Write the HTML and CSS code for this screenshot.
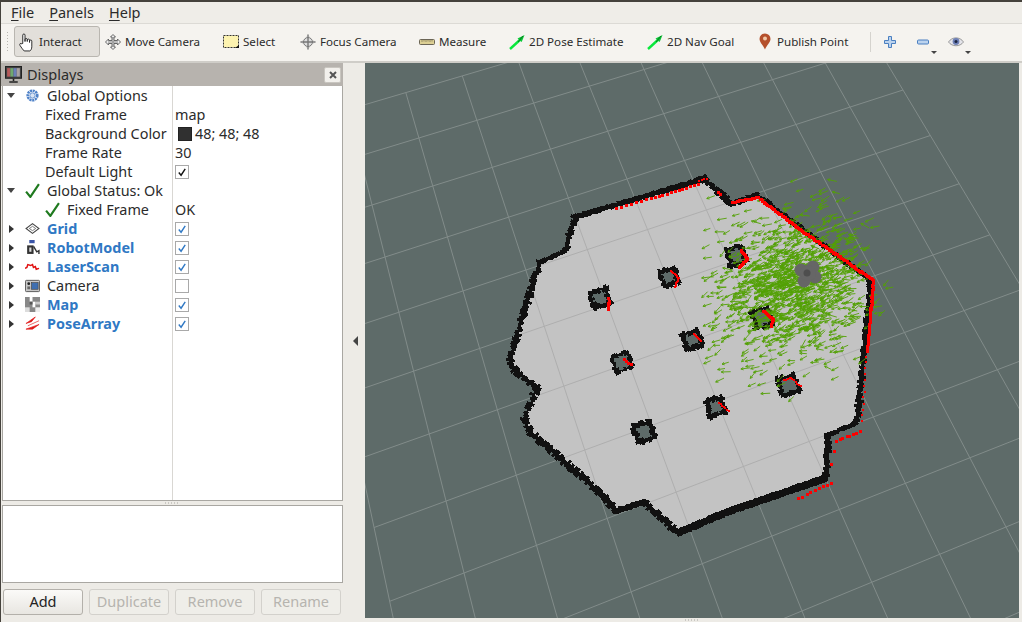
FILE: index.html
```html
<!DOCTYPE html>
<html lang="en">
<head>
<meta charset="utf-8">
<title>RViz</title>
<link rel="stylesheet" href="styles.css">
</head>
<body>
<div class="app">
  <nav class="menubar">
    <span class="menu"><u>F</u>ile</span>
    <span class="menu"><u>P</u>anels</span>
    <span class="menu"><u>H</u>elp</span>
  </nav>
  <div class="toolbar">
    <span class="grip"></span>
    <button class="tool t-interact active">
      <svg class="ticon" viewBox="0 0 17 21"><path d="M4 12V3.2a1.2 1.2 0 0 1 2.4 0V10V8a1.2 1.2 0 0 1 2.4 0v2V8.6a1.2 1.2 0 0 1 2.4 0V11V9.6a1.2 1.2 0 0 1 2.4 0v6c0 2-1 3.900-2 4.400H5.500C4.500 19 2.500 16.500 1 14c-.8-1.500.8-2.800 2-1.500z" fill="#fff" stroke="#222" stroke-width="1"/></svg>
      <span>Interact</span>
    </button>
    <button class="tool t-move">
      <svg class="ticon" viewBox="0 0 16 16"><path d="M8 .5 10.500 3H9v3.500h3.500V5L15.500 8l-3 3V9.500H9V13h1.500L8 15.500 5.500 13H7V9.500H3.500V11L.5 8l3-3v1.500H7V3H5.500z" fill="#eee" stroke="#666"/><path d="M3 8h10M8 3v10" stroke="#888"/></svg>
      <span>Move Camera</span>
    </button>
    <button class="tool t-select">
      <svg class="ticon" viewBox="0 0 16 16"><rect x=".5" y="1.500" width="15" height="12" fill="#fdf3b0" stroke="#333" stroke-dasharray="2 1"/><path d="M12 14h4v-3z" fill="#111"/></svg>
      <span>Select</span>
    </button>
    <button class="tool t-focus">
      <svg class="ticon" viewBox="0 0 16 16"><circle cx="8" cy="8" r="4.500" fill="#ddd" stroke="#777"/><path d="M8 .5V15.500M.5 8H15.500" stroke="#777" stroke-width="1.400"/><path d="M8 .5 6.500 3h3zM8 15.500 6.500 13h3zM.5 8 3 6.500v3zM15.500 8 13 6.500v3z" fill="#999"/></svg>
      <span>Focus Camera</span>
    </button>
    <button class="tool t-measure">
      <svg class="ticon" viewBox="0 0 16 16"><rect x=".5" y="5.500" width="15" height="5" rx="1" fill="#dccf94" stroke="#6b6555"/><path d="M3 6v2M5 6v1.500M7 6v2M9 6v1.500M11 6v2M13 6v1.500" stroke="#7a7050" stroke-width=".7"/></svg>
      <span>Measure</span>
    </button>
    <button class="tool t-pose">
      <svg class="ticon" viewBox="0 0 16 16"><path d="M1 15 12.500 4.500" stroke="#08e83c" stroke-width="2.400"/><path d="M8.500 4.500 15.500 1l-2.800 7z" fill="#09c836"/><path d="M9 8l5-6" stroke="#0b5a1a" stroke-width=".8"/></svg>
      <span>2D Pose Estimate</span>
    </button>
    <button class="tool t-nav">
      <svg class="ticon" viewBox="0 0 16 16"><path d="M1 15 12.500 4.500" stroke="#08e83c" stroke-width="2.400"/><path d="M8.500 4.500 15.500 1l-2.800 7z" fill="#09c836"/><path d="M9 8l5-6" stroke="#0b5a1a" stroke-width=".8"/></svg>
      <span>2D Nav Goal</span>
    </button>
    <button class="tool t-publish">
      <svg class="picon" viewBox="0 0 12 17"><path d="M6 16.500C4.500 12.500.5 9.500.5 6a5.500 5.500 0 0 1 11 0c0 3.500-4 6.500-5.500 10.500z" fill="#b5502c"/><circle cx="6" cy="5.500" r="2" fill="#f0c8a8"/></svg>
      <span>Publish Point</span>
    </button>
    <span class="tsep"></span>
    <svg class="vicon v-plus" viewBox="0 0 12 12"><path d="M4.500.5h3v4h4v3h-4v4h-3v-4h-4v-3h4z" fill="#bcd3ee" stroke="#4a7fc0"/></svg>
    <svg class="vicon v-minus" viewBox="0 0 12 12"><rect x=".5" y="4" width="11" height="4" rx="1" fill="#bcd3ee" stroke="#4a7fc0"/></svg>
    <span class="caret c-minus"></span>
    <svg class="vicon v-eye" viewBox="0 0 16 12"><path d="M.5 6C4 .5 12 .5 15.500 6 12 11 4 11 .5 6z" fill="#e4e4ea" stroke="#999"/><circle cx="8" cy="5.500" r="3.400" fill="#6d7fb5"/><circle cx="8" cy="5.500" r="1.500" fill="#1c2440"/></svg>
    <span class="caret c-eye"></span>
  </div>

  <div class="main">
    <aside class="dock">
      <header class="dock-title">
        <svg class="dock-icon" viewBox="0 0 16 16"><rect x=".5" y=".5" width="15" height="11" fill="#444" stroke="#222"/><rect x="2" y="2" width="3" height="8" fill="#b65a5a"/><rect x="5" y="2" width="3" height="8" fill="#6fa86f"/><rect x="8" y="2" width="3" height="8" fill="#6b7fb8"/><rect x="11" y="2" width="3" height="8" fill="#a8a0a0"/><path d="M8 12v2M4 15h8" stroke="#222" stroke-width="1.500"/></svg>
        <span class="dock-name">Displays</span>
        <span class="dock-close"><svg viewBox="0 0 8 8"><path d="M1 1l6 6M7 1 1 7" stroke="#555" stroke-width="2"/></svg></span>
      </header>

      <div class="tree">
        <div class="row"><div class="name"><span class="arrow down"></span><svg class="ic" viewBox="0 0 14 14"><circle cx="7" cy="7" r="4.500" fill="none" stroke="#4f82c8" stroke-width="2.400" stroke-dasharray="2 .6"/><circle cx="7" cy="7" r="2.500" fill="#d8e4f4" stroke="#4f82c8" stroke-width=".8"/></svg><span class="label">Global Options</span></div><div class="val"></div></div>
        <div class="row"><div class="name sub">Fixed Frame</div><div class="val">map</div></div>
        <div class="row"><div class="name sub">Background Color</div><div class="val"><span class="swatch"></span>48; 48; 48</div></div>
        <div class="row"><div class="name sub">Frame Rate</div><div class="val">30</div></div>
        <div class="row"><div class="name sub">Default Light</div><div class="val"><span class="check"><svg viewBox="0 0 13 13"><path d="M3 7l2.500 3L10 3" fill="none" stroke="#111" stroke-width="1.500"/></svg></span></div></div>
        <div class="row"><div class="name"><span class="arrow down"></span><svg class="ic" viewBox="0 0 14 14"><path d="M1 8l4 5L13 1" fill="none" stroke="#1f7a1f" stroke-width="2"/></svg><span class="label">Global Status: Ok</span></div><div class="val"></div></div>
        <div class="row"><div class="name sub2"><svg class="ic" viewBox="0 0 14 14"><path d="M1 8l4 5L13 1" fill="none" stroke="#1f7a1f" stroke-width="2"/></svg><span class="label">Fixed Frame</span></div><div class="val">OK</div></div>
        <div class="row"><div class="name"><span class="arrow"></span><svg class="ic" viewBox="0 0 14 14"><path d="M7 2.500 13 7 7 11.500 1 7z" fill="none" stroke="#444"/><path d="M7 5 10 7 7 9 4 7z" fill="none" stroke="#666" stroke-width=".8"/></svg><span class="label link">Grid</span></div><div class="val"><span class="check"><svg viewBox="0 0 13 13"><path d="M3 7l2.500 3L10 3" fill="none" stroke="#2f78c4" stroke-width="1.500"/></svg></span></div></div>
        <div class="row"><div class="name"><span class="arrow"></span><svg class="ic" viewBox="0 0 14 14"><rect x="4" y="0" width="5" height="3" fill="#3b55a8"/><rect x="2" y="5" width="6" height="8" fill="#333"/><rect x="4" y="7" width="2" height="4" fill="#ddd"/><path d="M8 6l3 5 2-1v3" fill="none" stroke="#333" stroke-width="1.300"/></svg><span class="label link">RobotModel</span></div><div class="val"><span class="check"><svg viewBox="0 0 13 13"><path d="M3 7l2.500 3L10 3" fill="none" stroke="#2f78c4" stroke-width="1.500"/></svg></span></div></div>
        <div class="row"><div class="name"><span class="arrow"></span><svg class="ic" viewBox="0 0 16 14"><path d="M0 9l2-1 1-3 3 1 2-1 1 3 2-1 1 3 3-1" fill="none" stroke="#e01010" stroke-width="1.600"/></svg><span class="label link">LaserScan</span></div><div class="val"><span class="check"><svg viewBox="0 0 13 13"><path d="M3 7l2.500 3L10 3" fill="none" stroke="#2f78c4" stroke-width="1.500"/></svg></span></div></div>
        <div class="row"><div class="name"><span class="arrow"></span><svg class="ic" viewBox="0 0 16 14"><rect x=".5" y="1.500" width="15" height="12" rx="1" fill="#c8c8c8" stroke="#555"/><rect x="7" y="4" width="7" height="7" fill="#3f6fb0" stroke="#333" stroke-width=".6"/><circle cx="4" cy="5" r="1.500" fill="#222"/><rect x="2.500" y="8" width="3" height="3" fill="#666"/></svg><span class="label">Camera</span></div><div class="val"><span class="check"></span></div></div>
        <div class="row"><div class="name"><span class="arrow"></span><svg class="ic" viewBox="0 0 16 16"><rect width="16" height="16" fill="#888"/><rect x="5" y="0" width="3" height="5" fill="#fff"/><rect x="11" y="5" width="5" height="3" fill="#ccc"/><rect x="8" y="5" width="3" height="6" fill="#fff"/><rect x="0" y="11" width="5" height="5" fill="#ddd"/><rect x="11" y="11" width="5" height="5" fill="#eee"/><rect x="5" y="5" width="3" height="3" fill="#555"/></svg><span class="label link">Map</span></div><div class="val"><span class="check"><svg viewBox="0 0 13 13"><path d="M3 7l2.500 3L10 3" fill="none" stroke="#2f78c4" stroke-width="1.500"/></svg></span></div></div>
        <div class="row"><div class="name"><span class="arrow"></span><svg class="ic" viewBox="0 0 16 14"><path d="M1 7 11 0 7 5zM1 13l14-5-7 5zM3 9.500 15 4" fill="#e01818" stroke="#e01818" stroke-width=".7"/></svg><span class="label link">PoseArray</span></div><div class="val"><span class="check"><svg viewBox="0 0 13 13"><path d="M3 7l2.500 3L10 3" fill="none" stroke="#2f78c4" stroke-width="1.500"/></svg></span></div></div>
      </div>

      <div class="hsplit"><span class="dots"></span></div>
      <div class="helpbox"></div>
      <div class="buttons">
        <button class="btn">Add</button>
        <button class="btn off" disabled>Duplicate</button>
        <button class="btn off" disabled>Remove</button>
        <button class="btn off" disabled>Rename</button>
      </div>
    </aside>

    <div class="vsplit"><span class="tri"></span></div>

    <section class="viewport">
      <svg id="scene" class="scene" viewBox="365 63 654 555" aria-label="3D view"></svg>
      <div class="statusgrip"><span class="dots"></span></div>
    </section>
  </div>
</div>
<script src="app.js"></script>
</body>
</html>
```

FILE: styles.css
```css
* { box-sizing: border-box; }
html, body { margin: 0; padding: 0; }
body {
  width: 1022px;
  height: 622px;
  overflow: hidden;
  background: #edebe6;
  font-family: "Noto Sans", "Open Sans", sans-serif;
  font-size: 14.400px;
  color: #2b2b2b;
}
.app {
  width: 1022px;
  height: 622px;
  display: flex;
  flex-direction: column;
  border-top: 2px solid #45423c;
  border-left: 1px solid #45423c;
}
button { font: inherit; color: inherit; background: none; border: 0; padding: 0; }
u { text-decoration-thickness: 1px; text-underline-offset: 2px; }

.menubar {
  height: 22px;
  display: flex;
  align-items: center;
  gap: 15px;
  padding: 0 0 1px 10px;
  font-size: 14.500px;
  background: #efedE8;
  border-bottom: 1px solid #dcdad5;
}

.toolbar {
  height: 39px;
  display: flex;
  align-items: center;
  background: #f5f3ef;
  border-bottom: 2px solid #cfcdc8;
  font-size: 11.600px;
  letter-spacing: -0.2px;
  padding-bottom: 2px;
}
.grip {
  width: 3px;
  height: 22px;
  margin: 0 5px;
  background-image: radial-gradient(#b8b6b0 0.7px, transparent 0.8px);
  background-size: 3px 3px;
}
.tool {
  height: 31px;
  display: flex;
  align-items: center;
  gap: 4px;
  padding: 0 0 0 5px;
  white-space: nowrap;
  flex: none;
  text-align: left;
}
.tool.active { background: #e2dfda; border: 1px solid #b9b6b0; border-radius: 3px; padding-left: 4px; }
.t-interact { width: 86px; }
.t-move { width: 118px; }
.t-select { width: 77px; }
.t-focus { width: 119px; }
.t-measure { width: 90px; }
.t-pose { width: 138px; }
.t-nav { width: 112px; }
.t-publish { width: 116px; gap: 6px; }
.ticon { width: 16px; height: 16px; flex: none; }
.t-interact .ticon { height: 20px; }
.picon { width: 12px; height: 17px; flex: none; }
.tsep { width: 1px; height: 20px; background: #d5d3ce; flex: none; }
.vicon { flex: none; }
.v-plus { width: 12px; height: 12px; margin-left: 13px; }
.v-minus { width: 12px; height: 12px; margin-left: 21px; }
.v-eye { width: 16px; height: 12px; margin-left: 11px; }
.caret {
  width: 0; height: 0;
  border: 3px solid transparent;
  border-top: 3px solid #444;
  border-bottom: 0;
  align-self: flex-end;
  margin: 0 0 5px 0;
  flex: none;
}
.c-minus { margin-left: 2px; }
.c-eye { margin-left: 1px; }

.main { flex: 1; display: flex; min-height: 0; }

.dock { width: 342px; flex: none; display: flex; flex-direction: column; }
.dock-title {
  height: 23px;
  display: flex;
  align-items: center;
  background: #b7b3ae;
  padding: 0 2px 0 4px;
  font-size: 14.500px;
  flex: none;
}
.dock-icon { width: 17px; height: 17px; }
.dock-name { margin: 0 0 2px 5px; flex: 1; }
.dock-close {
  width: 17px; height: 16px;
  background: #f2f0ec;
  border: 1px solid #c9c6c0;
  border-radius: 2px;
  display: flex; align-items: center; justify-content: center;
}
.dock-close svg { width: 8px; height: 8px; }

.tree {
  height: 415px;
  flex: none;
  margin-left: 1px;
  background: #fff;
  border: solid #a9a7a2;
  border-width: 0 1px 1px 1px;
  background-image: linear-gradient(#d9d7d3, #d9d7d3);
  background-size: 1px 100%;
  background-position: 169px 0;
  background-repeat: no-repeat;
}
.row { height: 19px; display: flex; align-items: center; white-space: nowrap; }
.name { width: 170px; flex: none; display: flex; align-items: center; padding-left: 4px; }
.name.sub { padding-left: 42px; }
.name.sub2 { padding-left: 42px; }
.val { display: flex; align-items: center; padding-left: 2px; }
.arrow {
  width: 0; height: 0;
  border-style: solid;
  border-width: 4.500px 0 4.500px 5px;
  border-color: transparent transparent transparent #333;
  margin-right: 10px;
  margin-left: 2px;
  flex: none;
}
.arrow.down { border-width: 5px 4.500px 0 4.500px; border-color: #444 transparent transparent transparent; margin-left: 0; margin-right: 9px; }
.ic { width: 15px; height: 15px; flex: none; margin-left: 1px; }
.label { margin-left: 7px; }
.sub2 .ic { margin-left: 0; }
.link { color: #2f78c4; font-weight: 700; }
.swatch {
  width: 14px; height: 14px;
  background: #303030;
  border: 1px solid #222;
  margin: 0 3px 0 3px;
  flex: none;
}
.check {
  width: 14px; height: 14px;
  border: 1px solid #a9a9a9;
  background: #fff;
  display: block;
}
.check svg { width: 12px; height: 12px; display: block; }

.hsplit { height: 4px; flex: none; display: flex; justify-content: center; align-items: center; }
.dots {
  width: 16px; height: 2px;
  background-image: radial-gradient(#a8a6a0 0.7px, transparent 0.8px);
  background-size: 3px 2px;
}
.helpbox {
  height: 78px;
  flex: none;
  margin-left: 1px;
  background: #fff;
  border: 1px solid #a9a7a2;
}
.buttons {
  display: flex;
  gap: 6px;
  margin: 6px 0 0 2px;
}
.btn {
  width: 80px;
  height: 26px;
  padding-bottom: 2px;
  border: 1px solid #b3b0aa;
  border-radius: 3px;
  background: linear-gradient(#fbfaf8, #e8e6e1);
  color: #222;
  font-size: 14.500px;
  flex: none;
}
.btn.off {
  color: #b6b4af;
  border-color: #d3d1cc;
  background: #efeee9;
}

.vsplit { width: 22px; flex: none; display: flex; align-items: center; justify-content: center; padding-bottom: 1px; }
.tri {
  width: 0; height: 0;
  border-style: solid;
  border-width: 5px 5px 5px 0;
  border-color: transparent #444 transparent transparent;
  margin-left: 3px;
  margin-bottom: 2px;
}

.viewport { width: 654px; flex: none; display: flex; flex-direction: column; }
.scene { width: 654px; height: 555px; display: block; background: #5e6b69; flex: none; }
.statusgrip { flex: 1; display: flex; justify-content: center; align-items: center; }
```

FILE: app.js
```js
(function () {
  var NS = 'http://www.w3.org/2000/svg';
  var svg = document.getElementById('scene');
  var seed = 12345;
  function rnd() {
    seed = (seed + 0x6D2B79F5) | 0;
    var t = Math.imul(seed ^ (seed >>> 15), 1 | seed);
    t = (t + Math.imul(t ^ (t >>> 7), 61 | t)) ^ t;
    return ((t ^ (t >>> 14)) >>> 0) / 4294967296;
  }
  function gauss() { return Math.sqrt(-2 * Math.log(1 - rnd())) * Math.cos(6.2832 * rnd()); }
  function add(tag, attrs, parent) {
    var el = document.createElementNS(NS, tag);
    for (var k in attrs) el.setAttribute(k, attrs[k]);
    (parent || svg).appendChild(el);
    return el;
  }
  function f(n) { return n.toFixed(1); }

  /* ---- grid: projective map from cell index to screen ---- */
  function solve(A, b) {
    var n = b.length;
    for (var i = 0; i < n; i++) {
      var p = i;
      for (var r = i + 1; r < n; r++) if (Math.abs(A[r][i]) > Math.abs(A[p][i])) p = r;
      var tmp = A[i]; A[i] = A[p]; A[p] = tmp;
      var tb = b[i]; b[i] = b[p]; b[p] = tb;
      for (r = i + 1; r < n; r++) {
        var m = A[r][i] / A[i][i];
        for (var c = i; c < n; c++) A[r][c] -= m * A[i][c];
        b[r] -= m * b[i];
      }
    }
    var x = [];
    for (i = n - 1; i >= 0; i--) {
      var s = b[i];
      for (c = i + 1; c < n; c++) s -= A[i][c] * x[c];
      x[i] = s / A[i][i];
    }
    return x;
  }
  var refs = [[-1, 1, 372, 205], [8, 2, 903, 90], [6, 9, 1006, 527], [-1, 7, 464, 573]];
  var A = [], B = [];
  refs.forEach(function (q) {
    A.push([q[0], q[1], 1, 0, 0, 0, -q[0] * q[2], -q[1] * q[2]]); B.push(q[2]);
    A.push([0, 0, 0, q[0], q[1], 1, -q[0] * q[3], -q[1] * q[3]]); B.push(q[3]);
  });
  var H = solve(A, B);
  function P(i, j) {
    var w = H[6] * i + H[7] * j + 1;
    return [(H[0] * i + H[1] * j + H[2]) / w, (H[3] * i + H[4] * j + H[5]) / w];
  }
  var gd = '', i, j, a, b;
  for (j = -1; j <= 10; j++) { a = P(-2, j); b = P(8, j); gd += 'M' + f(a[0]) + ' ' + f(a[1]) + 'L' + f(b[0]) + ' ' + f(b[1]); }
  for (i = -2; i <= 8; i++) { a = P(i, -1); b = P(i, 10); gd += 'M' + f(a[0]) + ' ' + f(a[1]) + 'L' + f(b[0]) + ' ' + f(b[1]); }
  add('path', { d: gd, fill: 'none', stroke: '#828c8a', 'stroke-width': 1 });

  /* ---- map ---- */
  var outline = [
    [575, 217, 5.5, .6], [697, 181, 5.5, 1], [703, 178, 6, 1.6], [732, 204, 5.5, 1], [757, 195, 5, 1.2],
    [871, 281, 6, 1.3], [863, 360, 6, 1.8], [857, 423, 4.5, .8], [828, 435, 6, 1.4], [826, 478, 7.5, .4],
    [727, 512, 7.5, .5], [678, 533, 6.5, 1.6], [644, 502, 6, .6], [616, 511, 6.5, 1.6], [600, 493, 6.5, 2],
    [560, 458, 6.5, 2], [530, 432, 6, 2.2], [524, 420, 6, 2.2], [537, 388, 6, 1.8], [515, 370, 6, 1.8],
    [510, 360, 6, 2], [530, 293, 6, 2], [540, 262, 4.5, .6], [565, 251, 6, 1.6]
  ];
  var polyD = 'M' + outline.map(function (p) { return p[0] + ' ' + p[1]; }).join('L') + 'Z';
  add('path', { d: polyD, fill: '#c3c3c3', 'shape-rendering': 'crispEdges' });
  var defs = add('defs', {});
  var clip = add('clipPath', { id: 'mapclip' }, defs);
  add('path', { d: polyD }, clip);
  add('path', { d: gd, fill: 'none', stroke: '#aeaeae', 'stroke-width': 1, 'clip-path': 'url(#mapclip)' });

  var obstacles = [
    [600, 298, 8, 4.5], [669, 277, 7.5, 4.5], [736, 256, 8, 4.5], [692, 340, 8, 5], [762, 318, 8.5, 4.5],
    [622, 362, 8, 4], [788, 385, 8.5, 4.5], [716, 407, 8, 4.5], [644, 432, 8.5, 5]
  ];
  var rot = -0.3;
  function corner(o, sx, sy) {
    var c = Math.cos(rot), s = Math.sin(rot), x = sx * o[2], y = sy * o[2];
    return [o[0] + x * c - y * s, o[1] + x * s + y * c];
  }
  var wall = '';
  function seg(p, q, th, jit) {
    var dx = q[0] - p[0], dy = q[1] - p[1], len = Math.hypot(dx, dy);
    var n = Math.max(1, Math.round(len / 2.4)), ux = dx / len, uy = dy / len, nx = -uy, ny = ux;
    for (var k = 0; k <= n; k++) {
      var t = k / n, cx = p[0] + dx * t, cy = p[1] + dy * t;
      var w1 = th / 2 + (rnd() - .5) * 2 * jit, w2 = th / 2 + (rnd() - .5) * 2 * jit, h = 1.5;
      var pts = [
        [cx - ux * h - nx * w1, cy - uy * h - ny * w1], [cx + ux * h - nx * w1, cy + uy * h - ny * w1],
        [cx + ux * h + nx * w2, cy + uy * h + ny * w2], [cx - ux * h + nx * w2, cy - uy * h + ny * w2]
      ];
      wall += 'M' + pts.map(function (v) { return f(v[0]) + ' ' + f(v[1]); }).join('L') + 'Z';
    }
  }
  outline.forEach(function (p, idx) {
    var q = outline[(idx + 1) % outline.length];
    seg(p, q, p[2], p[3]);
  });
  var holes = '';
  obstacles.forEach(function (o) {
    var cs = [corner(o, -1, -1), corner(o, 1, -1), corner(o, 1, 1), corner(o, -1, 1)];
    holes += 'M' + cs.map(function (v) { return f(v[0]) + ' ' + f(v[1]); }).join('L') + 'Z';
    for (var c = 0; c < 4; c++) seg(cs[c], cs[(c + 1) % 4], o[3], 1.6);
  });
  add('path', { d: holes, fill: '#5e6b69', 'shape-rendering': 'crispEdges' });
  add('path', { d: wall, fill: '#111', 'shape-rendering': 'crispEdges' });

  /* ---- particle cloud ---- */
  function arrow(x, y, ang, len) {
    var ux = Math.cos(ang), uy = Math.sin(ang);
    var tx = x - ux * len / 2, ty = y - uy * len / 2, hx = x + ux * len / 2, hy = y + uy * len / 2;
    var bx = hx - ux * 2.5, by = hy - uy * 2.5, px = -uy * 1.3, py = ux * 1.3;
    return 'M' + f(tx) + ' ' + f(ty) + 'L' + f(hx) + ' ' + f(hy) +
      'M' + f(bx + px) + ' ' + f(by + py) + 'L' + f(hx) + ' ' + f(hy) + 'L' + f(bx - px) + ' ' + f(by - py);
  }
  var cloud = '', n;
  function scatter(count, cx, cy, sx, sy) {
    for (n = 0; n < count; n++) {
      var gx = gauss(), gy = gauss();
      var x = cx + gx * sx, y = cy + gy * sy;
      y += (x - cx) * -0.12;
      if (x < 703 || x > 900 || y < 178 || y > 400) continue;
      var ang = Math.PI - 0.38 + gauss() * 0.28;
      cloud += arrow(x, y, ang, 7 + rnd() * 3);
    }
  }
  scatter(750, 797, 284, 33, 30);
  scatter(300, 790, 292, 44, 42);
  scatter(150, 775, 295, 52, 50);
  add('path', { d: cloud, fill: 'none', stroke: '#52a004', 'stroke-width': .9 });

  /* ---- laser returns ---- */
  var red = '';
  function dots(p, q, step, size) {
    var len = Math.hypot(q[0] - p[0], q[1] - p[1]), c = Math.max(1, Math.round(len / step));
    for (var k = 0; k <= c; k++) {
      var t = k / c, x = Math.round(p[0] + (q[0] - p[0]) * t + (rnd() - .5)), y = Math.round(p[1] + (q[1] - p[1]) * t + (rnd() - .5));
      red += 'M' + x + ' ' + y + 'h' + size + 'v' + size + 'h-' + size + 'Z';
    }
  }
  dots([615, 207], [650, 197], 5.5, 3);
  dots([650, 197], [697, 183], 4, 3);
  dots([698, 180], [706, 178], 3, 2);
  dots([717, 191], [719, 193], 2, 3);
  dots([731, 201], [757, 196], 1.5, 3);
  dots([759, 198], [800, 229], 1.2, 3);
  dots([800, 229], [872, 279], 1.2, 3);
  dots([872, 281], [866, 350], 1.3, 3);
  dots([866, 350], [861, 420], 6, 2);
  dots([859, 430], [835, 440], 3.5, 3);
  dots([830, 463], [833, 450], 12, 3);
  dots([830, 482], [797, 497], 4.5, 3);
  dots([607, 297], [608, 302], 3, 3);
  dots([607, 302], [607, 308], 4, 3);
  dots([670, 270], [678, 277], 1.5, 2);
  dots([678, 277], [674, 286], 1.5, 2);
  dots([740, 249], [746, 257], 1.3, 3);
  dots([746, 257], [738, 266], 1.3, 3);
  dots([762, 310], [772, 318], 1.3, 3);
  dots([772, 318], [770, 325], 1.3, 3);
  dots([693, 333], [700, 340], 1.5, 2);
  dots([623, 358], [630, 363], 3, 3);
  dots([783, 379], [790, 377], 2, 2);
  dots([790, 377], [800, 385], 2, 2);
  dots([718, 402], [728, 410], 2, 2);
  add('path', { d: red, fill: '#f00', 'shape-rendering': 'crispEdges' });

  /* ---- robot ---- */
  var robot = add('g', { fill: '#666' });
  [[801, 270, 6.5], [813, 267, 6.5], [815, 277, 6.5], [804, 281, 6.5], [808, 273, 8]].forEach(function (c) {
    add('circle', { cx: c[0], cy: c[1], r: c[2] }, robot);
  });
  add('circle', { cx: 807, cy: 273, r: 3.5, fill: '#4e4e4e' });
})();
```
